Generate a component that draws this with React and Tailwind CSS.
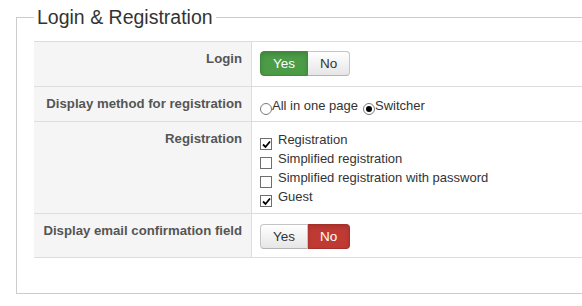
import React from "react";

const labelCls = "bg-[#f5f5f5] border-r border-[#dddddd] text-right pr-[9px] font-bold text-[13.2px] leading-[18px] text-[#555555]";

function Toggle({ value }) {
    const base = "h-[25px] px-[12px] text-[13.5px] leading-[23px] border";
    const off = "bg-gradient-to-b from-white to-[#e6e6e6] border-[#c5c5c5] border-b-[#b3b3b3] text-[#333333]";
    const yesCls = value ? "bg-[#4b9b47] border-[#3f8a3c] text-white shadow-[inset_0_2px_4px_rgba(0,0,0,0.15)]" : off;
    const noCls = !value ? "bg-[#c03a34] border-[#a8302b] text-white shadow-[inset_0_2px_4px_rgba(0,0,0,0.15)]" : off;
    return (
        <div className="flex">
            <button className={`${base} ${yesCls} rounded-l-[4px]`}>Yes</button>
            <button className={`${base} ${noCls} rounded-r-[4px] border-l-0`}>No</button>
        </div>
    );
}

function Radio({ checked, label }) {
    return (
        <span className="flex items-start">
            <span className="mt-[6px] w-[12px] h-[12px] rounded-full border border-[#7a7a7a] bg-white flex items-center justify-center">
                {checked && <span className="w-[6px] h-[6px] rounded-full bg-black"></span>}
            </span>
            <span>{label}</span>
        </span>
    );
}

function Check({ checked, label }) {
    return (
        <div className="flex items-start h-[19px]">
            <span className="mt-[8px] w-[12px] h-[12px] border border-[#6e6e6e] bg-white flex items-center justify-center shrink-0">
                {checked && (
                    <svg width="9" height="9" viewBox="0 0 9 9">
                        <path d="M1 4.5 L3.5 7 L8 1.5" fill="none" stroke="#000" strokeWidth="1.8" />
                    </svg>
                )}
            </span>
            <span className="ml-[6px]">{label}</span>
        </div>
    );
}

export default function App() {
    return (
        <div className="w-full h-[306px] overflow-hidden bg-white pt-[5px]" style={{ fontFamily: '"Liberation Sans", Arial, sans-serif' }}>
            <fieldset className="ml-4 -mr-10 border border-[#cccccc] pl-[17px] pt-[12px] pb-[35px]">
                <legend className="px-[3px] text-[19.5px] leading-[24px] text-[#333333]">Login &amp; Registration</legend>

                <div className="grid grid-cols-[218px_1fr] border-t border-b border-[#dddddd] text-[13px] text-[#333333]">
                    {/* Login */}
                    <div className={`${labelCls} pt-[8px]`}>Login</div>
                    <div className="pl-[8px] pt-[9px] pb-[10px]">
                        <Toggle value={true} />
                    </div>

                    {/* Display method */}
                    <div className={`${labelCls} pt-[8px] border-t border-t-[#dddddd]`}>Display method for registration</div>
                    <div className="pl-[8px] pt-[10px] pb-[6px] leading-[18px] border-t border-[#dddddd] flex">
                        <Radio checked={false} label="All in one page" />
                        <span className="ml-[5px]"><Radio checked={true} label="Switcher" /></span>
                    </div>

                    {/* Registration */}
                    <div className={`${labelCls} pt-[8px] border-t border-t-[#dddddd]`}>Registration</div>
                    <div className="pl-[8px] pt-[8px] pb-[7px] leading-[19px] border-t border-[#dddddd]">
                        <Check checked={true} label="Registration" />
                        <Check checked={false} label="Simplified registration" />
                        <Check checked={false} label="Simplified registration with password" />
                        <Check checked={true} label="Guest" />
                    </div>

                    {/* Email confirmation */}
                    <div className={`${labelCls} pt-[8px] border-t border-t-[#dddddd]`}>Display email confirmation field</div>
                    <div className="pl-[8px] pt-[10px] pb-[8px] border-t border-[#dddddd]">
                        <Toggle value={false} />
                    </div>
                </div>
            </fieldset>
        </div>
    );
}
